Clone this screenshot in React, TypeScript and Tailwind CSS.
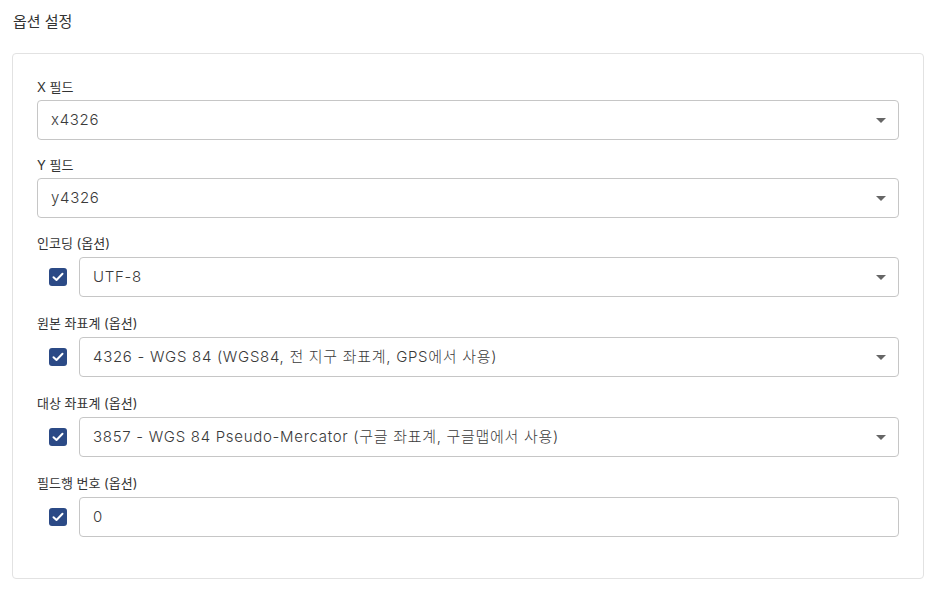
const font = "font-['Inter','Noto_Sans_CJK_KR',sans-serif]";

type Field = {
  label: string;
  value: string;
  optional?: boolean;
  select?: boolean;
};

const fields: Field[] = [
  { label: "X 필드", value: "x4326", select: true },
  { label: "Y 필드", value: "y4326", select: true },
  { label: "인코딩 (옵션)", value: "UTF-8", optional: true, select: true },
  { label: "원본 좌표계 (옵션)", value: "4326 - WGS 84 (WGS84, 전 지구 좌표계, GPS에서 사용)", optional: true, select: true },
  { label: "대상 좌표계 (옵션)", value: "3857 - WGS 84 Pseudo-Mercator (구글 좌표계, 구글맵에서 사용)", optional: true, select: true },
  { label: "필드행 번호 (옵션)", value: "0", optional: true },
];

const Caret = () => (
  <svg width="10" height="5" viewBox="0 0 10 5" className="shrink-0">
    <path d="M0 0h10L5 5z" fill="#666" />
  </svg>
);

const Checkbox = () => (
  <div className="ml-3 mr-3 flex h-[18px] w-[18px] shrink-0 items-center justify-center rounded-[3px] bg-[#2b4a86]">
    <svg width="12" height="10" viewBox="0 0 12 10">
      <path d="M1.5 5.2 4.5 8 10.5 1.8" fill="none" stroke="#fff" strokeWidth="2" strokeLinecap="round" strokeLinejoin="round" />
    </svg>
  </div>
);

const Control = ({ value, select }: { value: string; select?: boolean }) => (
  <div className="flex h-10 flex-1 items-center justify-between rounded-[4px] border border-[#c6c6c6] bg-white pl-[13px] pr-3">
    <span className="text-[15px] font-light tracking-[0.7px] text-[#3a3a3a]">{value}</span>
    {select && <Caret />}
  </div>
);

export default function App() {
  return (
    <div className={`${font} min-h-screen bg-white pl-3 pr-[7px] pt-[11px]`}>
      <h2 className="mb-[20px] pl-px text-[15px] leading-[22px] text-[#333]">옵션 설정</h2>
      <div className="rounded-[4px] border border-[#e2e2e2] px-6 pt-6 pb-6">
        {fields.map((f) => (
          <div key={f.label} className="mb-4">
            <div className="mb-1 text-[13px] leading-[18px] text-[#333]">{f.label}</div>
            {f.optional ? (
              <div className="flex h-[42px] items-center">
                <Checkbox />
                <Control value={f.value} select={f.select} />
              </div>
            ) : (
              <Control value={f.value} select={f.select} />
            )}
          </div>
        ))}
      </div>
    </div>
  );
}
